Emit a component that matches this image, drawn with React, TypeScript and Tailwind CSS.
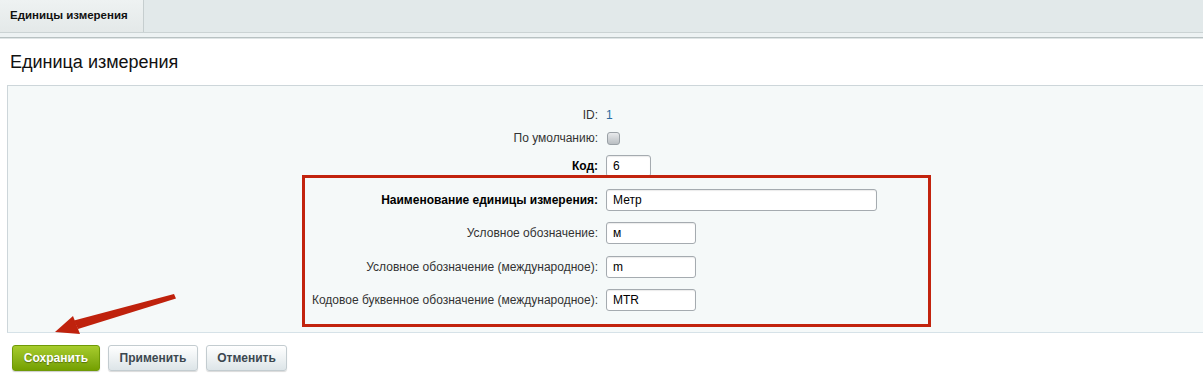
import React from 'react'

const font = { fontFamily: '"Liberation Sans", Arial, sans-serif' }

function Field({ value, width }: { value: string; width: string }) {
  return (
    <div
      className={`${width} h-[22px] rounded-[3px] border border-[#a5abb0] bg-white pl-[6px] text-[12px] leading-[20px] text-black shadow-[inset_0_1px_1px_rgba(0,0,0,0.08)]`}
    >
      {value}
    </div>
  )
}

function Row({
  label,
  bold,
  height,
  children,
}: {
  label: string
  bold?: boolean
  height: string
  children: React.ReactNode
}) {
  return (
    <div className={`flex items-center ${height}`}>
      <div
        className={`w-[598px] shrink-0 pr-[8px] text-right text-[12px] ${
          bold ? 'font-bold text-black' : 'text-[#333]'
        }`}
      >
        {label}
      </div>
      <div className="flex items-center">{children}</div>
    </div>
  )
}

export default function App() {
  return (
    <div className="relative h-[378px] w-[1203px] overflow-hidden bg-white" style={font}>
      {/* tab strip */}
      <div className="flex h-[33px] border-b border-[#cbd3d4] bg-[#e2e9ea]">
        <div className="flex h-full w-[144px] items-center border-r border-[#c6cecf] bg-gradient-to-b from-[#eef2f2] to-[#e4e9e9] pl-[10px] text-[11.5px] font-bold text-[#111]">
          Единицы измерения
        </div>
      </div>
      <div className="h-[5px] border-b border-[#b8c1c2] bg-[#edf2f3]" />
      <div className="h-[1px] bg-[#dfe5e6]" />

      <h1 className="pl-[10px] pt-[12px] text-[18px] leading-[22px] text-[#111]">Единица измерения</h1>

      {/* form panel */}
      <div className="ml-[7px] mt-[12px] border-l border-t border-b border-[#cdd6da] border-b-[#d6e2e8] bg-[#f5f9f9] pb-[15px] pt-[17.5px]">
        <Row label="ID:" height="h-[23px]">
          <span className="text-[12px] text-[#2a6ca0]">1</span>
        </Row>
        <Row label="По умолчанию:" height="h-[23px]">
          <div className="ml-[1px] h-[13px] w-[13px] rounded-[3px] border border-[#9aa1a6] bg-gradient-to-b from-[#e8eaec] to-[#b9bec2]" />
        </Row>
        <Row label="Код:" bold height="h-[33.5px]">
          <Field value="6" width="w-[45px]" />
        </Row>
        <Row label="Наименование единицы измерения:" bold height="h-[33.5px]">
          <Field value="Метр" width="w-[271px]" />
        </Row>
        <Row label="Условное обозначение:" height="h-[33.5px]">
          <Field value="м" width="w-[90px]" />
        </Row>
        <Row label="Условное обозначение (международное):" height="h-[33.5px]">
          <Field value="m" width="w-[90px]" />
        </Row>
        <Row label="Кодовое буквенное обозначение (международное):" height="h-[33.5px]">
          <Field value="MTR" width="w-[90px]" />
        </Row>
      </div>

      {/* buttons */}
      <div className="ml-[12px] mt-[12px] flex gap-[8px]">
        <button className="h-[26px] w-[88px] rounded-[3px] border border-[#6f9a07] bg-gradient-to-b from-[#a7cc2c] to-[#74a000] text-[12px] font-bold text-white [text-shadow:0_1px_1px_rgba(0,0,0,0.35)] shadow-[0_1px_1px_rgba(0,0,0,0.2)]">
          Сохранить
        </button>
        <button className="h-[26px] w-[90px] rounded-[3px] border border-[#c3ccd0] bg-gradient-to-b from-[#ffffff] to-[#dde5e8] text-[12px] font-bold text-[#3c4850] shadow-[0_1px_1px_rgba(0,0,0,0.15)]">
          Применить
        </button>
        <button className="h-[26px] w-[81px] rounded-[3px] border border-[#c3ccd0] bg-gradient-to-b from-[#ffffff] to-[#dde5e8] text-[12px] font-bold text-[#3c4850] shadow-[0_1px_1px_rgba(0,0,0,0.15)]">
          Отменить
        </button>
      </div>

      {/* annotation: red frame */}
      <div className="pointer-events-none absolute left-[302px] top-[175px] h-[152px] w-[629px] border-[3px] border-[#c2240e]" />

      {/* annotation: arrow */}
      <svg className="pointer-events-none absolute left-0 top-0" width="1203" height="378">
        <polygon points="174,294 176,298.5 78,329 74,320.5" fill="#bf220d" />
        <polygon points="55,332 73,316 80,334" fill="#bf220d" />
      </svg>
    </div>
  )
}
